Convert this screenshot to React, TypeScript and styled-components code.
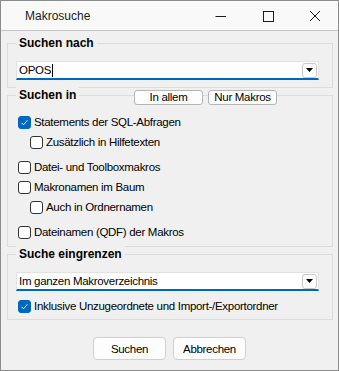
import React from "react";
import styled, { createGlobalStyle } from "styled-components";

const GlobalStyle = createGlobalStyle`
  html, body {
    margin: 0;
    padding: 0;
    background: #ffffff;
  }
  body {
    font-family: "Liberation Sans", Arial, sans-serif;
    font-size: 11.5px;
    letter-spacing: -0.3px;
    color: #000;
  }
`;

const Window = styled.div`
  width: 339px;
  height: 371px;
  box-sizing: border-box;
  border: 1px solid #8c8c8c;
  background: #f0f0f0;
  display: flex;
  flex-direction: column;
`;

const TitleBar = styled.div`
  height: 29px;
  background: #f9f9f9;
  border-bottom: 1px solid #c4c4c4;
  display: flex;
  align-items: center;
  padding-left: 24px;
`;

const Title = styled.div`
  flex: 1;
  font-size: 12px;
  letter-spacing: 0;
  color: #1b1b1b;
`;

const Controls = styled.div`
  display: flex;
  height: 100%;
`;

const ControlButton = styled.div`
  width: 47px;
  height: 100%;
  display: flex;
  align-items: center;
  justify-content: center;
`;

const Body = styled.div`
  flex: 1;
  display: flex;
  flex-direction: column;
  padding: 12px 5px 0 6px;
  gap: 7px;
`;

const Group = styled.div<{ $pt: number; $pb: number }>`
  position: relative;
  border: 1px solid #dcdcdc;
  padding: ${(p) => p.$pt}px 13px ${(p) => p.$pb}px 8px;
  display: flex;
  flex-direction: column;
`;

const GroupTitle = styled.div`
  position: absolute;
  top: -9px;
  left: 8px;
  padding: 0 3px;
  background: #f0f0f0;
  font-size: 12px;
  font-weight: bold;
  letter-spacing: 0;
  line-height: 16px;
`;

const HeaderButtons = styled.div`
  position: absolute;
  top: -6px;
  left: 126px;
  display: flex;
  gap: 5px;
`;

const SmallButton = styled.div`
  width: 67px;
  height: 13px;
  box-sizing: content-box;
  border: 1px solid #b5b5b5;
  border-radius: 3px;
  background: #fdfdfd;
  display: flex;
  align-items: center;
  justify-content: center;
  line-height: 13px;
`;

const Combo = styled.div`
  height: 16px;
  background: #fff;
  border: 1px solid #e2e2e2;
  border-bottom: 2px solid #0067c0;
  display: flex;
  align-items: center;
  padding-left: 2px;
`;

const ComboText = styled.div`
  flex: 1;
  line-height: 16px;
`;

const Caret = styled.span`
  display: inline-block;
  width: 1px;
  height: 13px;
  background: #000;
  vertical-align: middle;
  margin-left: 1px;
`;

const DropButton = styled.div`
  width: 13px;
  height: 13px;
  margin-right: 1px;
  border: 1px solid #c8c8c8;
  border-radius: 3px;
  background: #fff;
  display: flex;
  align-items: center;
  justify-content: center;
`;

const Row = styled.div<{ $indent?: boolean; $gap?: boolean }>`
  height: 20px;
  display: flex;
  align-items: center;
  gap: 3px;
  padding-left: ${(p) => (p.$indent ? 14 : 2)}px;
  margin-top: ${(p) => (p.$gap ? 5 : 0)}px;
`;

const Box = styled.div<{ $checked?: boolean }>`
  width: 11px;
  height: 11px;
  border: 1px solid ${(p) => (p.$checked ? "#0067c0" : "#333")};
  border-radius: 3px;
  background: ${(p) => (p.$checked ? "#0067c0" : "#fff")};
  display: flex;
  align-items: center;
  justify-content: center;
`;

const Footer = styled.div`
  display: flex;
  justify-content: center;
  gap: 7px;
  margin-top: 10px;
  padding-right: 1px;
`;

const DialogButton = styled.div`
  width: 71px;
  height: 21px;
  border: 1px solid #d0d0d0;
  border-radius: 4px;
  background: #fdfdfd;
  display: flex;
  align-items: center;
  justify-content: center;
`;

function Checkbox({ checked, label, indent, gap }: { checked?: boolean; label: string; indent?: boolean; gap?: boolean }) {
  return (
    <Row $indent={indent} $gap={gap}>
      <Box $checked={checked}>
        {checked && (
          <svg width="9" height="9" viewBox="0 0 9 9">
            <path d="M1.5 4.8 L3.5 6.8 L7.5 2.3" stroke="#fff" strokeWidth="1" fill="none" />
          </svg>
        )}
      </Box>
      <span>{label}</span>
    </Row>
  );
}

function Arrow() {
  return (
    <svg width="7" height="4" viewBox="0 0 7 4">
      <path d="M0 0 H7 L3.5 4 Z" fill="#000" />
    </svg>
  );
}

export default function App() {
  return (
    <>
      <GlobalStyle />
      <Window>
        <TitleBar>
          <Title>Makrosuche</Title>
          <Controls>
            <ControlButton>
              <svg width="12" height="12" viewBox="0 0 12 12">
                <path d="M0.5 6.5 H11" stroke="#1b1b1b" strokeWidth="1" />
              </svg>
            </ControlButton>
            <ControlButton>
              <svg width="12" height="12" viewBox="0 0 12 12">
                <rect x="1.5" y="1.5" width="10" height="10" stroke="#1b1b1b" fill="none" />
              </svg>
            </ControlButton>
            <ControlButton>
              <svg width="12" height="12" viewBox="0 0 12 12">
                <path d="M1 1 L11 11 M11 1 L1 11" stroke="#1b1b1b" strokeWidth="1" />
              </svg>
            </ControlButton>
          </Controls>
        </TitleBar>
        <Body>
          <Group $pt={17} $pb={7}>
            <GroupTitle>Suchen nach</GroupTitle>
            <Combo>
              <ComboText>
                OPOS<Caret />
              </ComboText>
              <DropButton>
                <Arrow />
              </DropButton>
            </Combo>
          </Group>
          <Group $pt={16} $pb={4}>
            <GroupTitle>Suchen in</GroupTitle>
            <HeaderButtons>
              <SmallButton>In allem</SmallButton>
              <SmallButton>Nur Makros</SmallButton>
            </HeaderButtons>
            <Checkbox checked label="Statements der SQL-Abfragen" />
            <Checkbox indent label="Zusätzlich in Hilfetexten" />
            <Checkbox gap label="Datei- und Toolboxmakros" />
            <Checkbox label="Makronamen im Baum" />
            <Checkbox indent label="Auch in Ordnernamen" />
            <Checkbox gap label="Dateinamen (QDF) der Makros" />
          </Group>
          <Group $pt={17} $pb={3}>
            <GroupTitle>Suche eingrenzen</GroupTitle>
            <Combo>
              <ComboText>Im ganzen Makroverzeichnis</ComboText>
              <DropButton>
                <Arrow />
              </DropButton>
            </Combo>
            <Checkbox gap checked label="Inklusive Unzugeordnete und Import-/Exportordner" />
          </Group>
          <Footer>
            <DialogButton>Suchen</DialogButton>
            <DialogButton>Abbrechen</DialogButton>
          </Footer>
        </Body>
      </Window>
    </>
  );
}
